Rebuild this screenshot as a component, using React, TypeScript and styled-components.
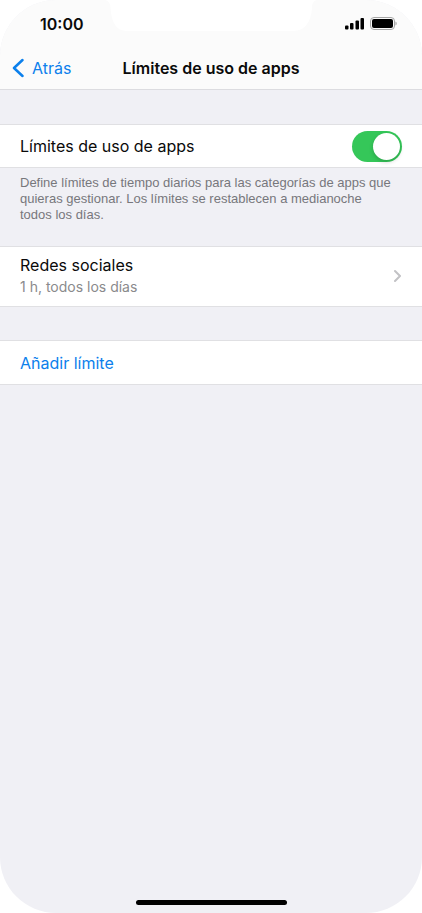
import React from "react";
import styled, { createGlobalStyle } from "styled-components";

const GlobalStyle = createGlobalStyle`
  * { box-sizing: border-box; }
  body {
    margin: 0;
    background: #ffffff;
    font-family: Inter, "Liberation Sans", sans-serif;
  }
  button, input { font: inherit; margin: 0; }
`;

const Screen = styled.div`
  display: flex;
  flex-direction: column;
  min-height: 100vh;
  background: #f0f0f5;
  border-radius: 56px;
  overflow: hidden;
`;

const Header = styled.header`
  background: #fbfbfb;
  border-bottom: 1px solid #dcdce0;
`;

const StatusBar = styled.div`
  display: grid;
  grid-template-columns: 1fr 212px 1fr;
  height: 47px;
`;

const Clock = styled.time`
  padding: 14px 0 0 40px;
  font-size: 16px;
  line-height: 20px;
  font-weight: 600;
  color: #0a0a0a;
  white-space: nowrap;
`;

const StatusIcons = styled.div`
  display: flex;
  justify-content: flex-end;
  gap: 5px;
  padding: 17px 25px 0 0;
`;

const NavBar = styled.nav`
  display: grid;
  grid-template-columns: 1fr auto 1fr;
  align-items: center;
  height: 42px;
  padding: 0 12px;
`;

const BackLink = styled.a`
  display: flex;
  align-items: center;
  gap: 8px;
  color: #0c80ec;
  font-size: 16px;
  line-height: 20px;
  text-decoration: none;
`;

const Title = styled.h1`
  margin: 0;
  font-size: 16px;
  line-height: 20px;
  font-weight: 600;
  color: #0a0a0a;
`;

const Content = styled.main`
  display: flex;
  flex-direction: column;
  flex: 1;
  padding-top: 34px;
`;

const rowBase = `
  display: flex;
  align-items: center;
  justify-content: space-between;
  width: 100%;
  padding: 0 20px;
  border: 0 solid #e0e0e3;
  border-width: 1px 0;
  background: #ffffff;
  text-align: left;
`;

const SettingRow = styled.label`
  ${rowBase}
  height: 44px;
  font-size: 16px;
  color: #0a0a0a;
`;

const ButtonRow = styled.button<{ $tall?: boolean; $accent?: boolean }>`
  ${rowBase}
  height: ${(p) => (p.$tall ? "61px" : "45px")};
  padding-bottom: ${(p) => (p.$tall ? "2px" : "0")};
  margin-bottom: 33px;
  font-size: 16px;
  color: ${(p) => (p.$accent ? "#0c80ec" : "#0a0a0a")};
`;

const Switch = styled.input`
  appearance: none;
  display: flex;
  justify-content: flex-end;
  width: 50px;
  height: 31px;
  padding: 2px;
  border-radius: 16px;
  background: #d9d9de;

  &::before {
    content: "";
    width: 27px;
    height: 27px;
    border-radius: 50%;
    background: #ffffff;
    box-shadow: 0 2px 4px rgba(0, 0, 0, 0.18);
  }

  &:checked { background: #35c759; }
  &:not(:checked) { justify-content: flex-start; }
`;

const Footnote = styled.p`
  margin: 0;
  padding: 7px 20px 23px;
  font-family: "Liberation Sans", sans-serif;
  font-size: 13px;
  line-height: 16px;
  color: #77777c;
`;

const KeepTogether = styled.span`
  white-space: nowrap;
`;

const LimitText = styled.span`
  display: flex;
  flex-direction: column;
  gap: 1px;
  line-height: 22px;
`;

const LimitDetail = styled.span`
  font-size: 14px;
  line-height: 20px;
  color: #8a8a8c;
`;

const HomeIndicator = styled.div`
  align-self: center;
  width: 151px;
  height: 5px;
  margin: auto 0 8px;
  border-radius: 3px;
  background: #000000;
`;

const Notch = () => (
  <svg width="212" height="31" viewBox="0 0 212 31" aria-hidden="true">
    <path
      d="M0 0C4 1 5.500 4 5.500 8C6.500 22 11 31 22 31H188C200 31 206 22 207 8C207 4 208 1 212 0Z"
      fill="#ffffff"
    />
  </svg>
);

const Signal = () => (
  <svg width="20" height="13" viewBox="0 0 20 13" aria-hidden="true">
    <rect x="0" y="8.500" width="3.500" height="4" rx="1" />
    <rect x="5" y="6" width="3.500" height="6.500" rx="1" />
    <rect x="10.500" y="3.500" width="3.500" height="9" rx="1" />
    <rect x="15.500" y="1" width="3.500" height="11.500" rx="1" />
  </svg>
);

const Battery = () => (
  <svg width="27" height="14" viewBox="0 0 27 14" aria-hidden="true">
    <rect x="0.500" y="0.500" width="24" height="12" rx="3.500" fill="none" stroke="#a6a6a6" />
    <rect x="2" y="2" width="21" height="9" rx="2" />
    <path d="M25.500 4.500C27 5 27 8 25.500 8.500Z" fill="#999999" />
  </svg>
);

const BackChevron = () => (
  <svg width="12" height="20" viewBox="0 0 12 20" fill="none" aria-hidden="true">
    <path d="M10.500 2L2 10L10.500 18" stroke="#0c80ec" strokeWidth="2.500" strokeLinecap="round" strokeLinejoin="round" />
  </svg>
);

const RowChevron = () => (
  <svg width="8" height="14" viewBox="0 0 8 14" fill="none" aria-hidden="true">
    <path d="M1 2L6 7L1 12" stroke="#c2c2c5" strokeWidth="2" strokeLinecap="round" strokeLinejoin="round" />
  </svg>
);

export default function App() {
  return (
    <>
      <GlobalStyle />
      <Screen>
        <Header>
          <StatusBar>
            <Clock>10:00</Clock>
            <Notch />
            <StatusIcons>
              <Signal />
              <Battery />
            </StatusIcons>
          </StatusBar>
          <NavBar>
            <BackLink href="#atras">
              <BackChevron />
              Atrás
            </BackLink>
            <Title>Límites de uso de apps</Title>
          </NavBar>
        </Header>
        <Content>
          <SettingRow htmlFor="app-limits">
            Límites de uso de apps
            <Switch id="app-limits" type="checkbox" role="switch" defaultChecked />
          </SettingRow>
          <Footnote>
            Define límites de tiempo diarios para las categorías de apps que quieras gestionar. Los
            límites se restablecen a medianoche <KeepTogether>todos los días.</KeepTogether>
          </Footnote>
          <ButtonRow type="button" $tall>
            <LimitText>
              Redes sociales
              <LimitDetail>1 h, todos los días</LimitDetail>
            </LimitText>
            <RowChevron />
          </ButtonRow>
          <ButtonRow type="button" $accent>
            Añadir límite
          </ButtonRow>
          <HomeIndicator />
        </Content>
      </Screen>
    </>
  );
}
